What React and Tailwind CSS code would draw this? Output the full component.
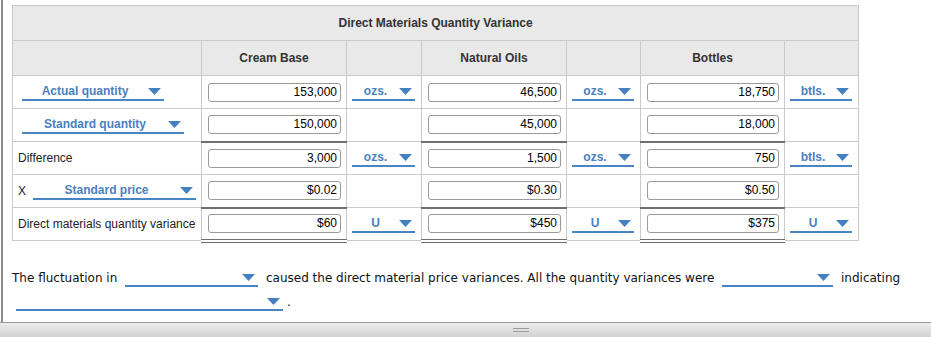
import React from 'react';

const Caret = ({ className = '' }) => (
  <svg width="13" height="7" viewBox="0 0 13 7" className={className}>
    <path d="M0 0h13L6.5 7z" fill="#4581c0" />
  </svg>
);

function Dropdown({ label = '', width, className = '' }) {
  return (
    <span
      className={`inline-flex items-center h-[18px] border-b-2 border-[#4a85c3] align-middle ${width} ${className}`}
    >
      <span className="flex-1 text-center font-bold text-[#4a80bf] leading-[16px]">{label}</span>
      <Caret className="mr-[3px] shrink-0" />
    </span>
  );
}

function Box({ value }) {
  return (
    <div className="h-[19px] w-full border border-[#9a9a9a] rounded-[3px] bg-white text-right pr-[3px] leading-[17px] text-black">
      {value}
    </div>
  );
}

const cell = 'border border-[#c8cacd] p-0';
const inputCell = `${cell} pl-[6px] pr-[5px]`;
const thick = 'border-t-2 border-t-[#6f6f6f]';
const dbl = 'border-b-4 border-b-[#6f6f6f] border-double';

export default function App() {
  const rows = [
    {
      label: (
        <div className="pl-[9px]">
          <Dropdown label="Actual quantity" width="w-[142px]" />
        </div>
      ),
      values: ['153,000', '46,500', '18,750'],
      units: ['ozs.', 'ozs.', 'btls.'],
    },
    {
      label: (
        <div className="pl-[9px]">
          <Dropdown label="Standard quantity" width="w-[162px]" />
        </div>
      ),
      values: ['150,000', '45,000', '18,000'],
      units: [null, null, null],
    },
    {
      label: <div className="pl-[5px]">Difference</div>,
      values: ['3,000', '1,500', '750'],
      units: ['ozs.', 'ozs.', 'btls.'],
      top: true,
    },
    {
      label: (
        <div className="pl-[5px] flex items-center">
          <span className="w-[15px]">X</span>
          <Dropdown label="Standard price" width="w-[163px]" />
        </div>
      ),
      values: ['$0.02', '$0.30', '$0.50'],
      units: [null, null, null],
    },
    {
      label: <div className="pl-[5px]">Direct materials quantity variance</div>,
      values: ['$60', '$450', '$375'],
      units: ['U', 'U', 'U'],
      top: true,
      last: true,
    },
  ];

  return (
    <div className="w-[931px] h-[337px] bg-white overflow-hidden font-['Liberation_Sans',Arial,sans-serif] text-[12px] text-[#222]">
      <div className="h-[322px] ml-px border-l-2 border-[#8c8c8c] pl-[9px] pt-[5px]">
        <table className="border-collapse table-fixed w-[846px]">
          <colgroup>
            <col className="w-[189px]" />
            <col className="w-[145px]" />
            <col className="w-[75px]" />
            <col className="w-[145px]" />
            <col className="w-[74px]" />
            <col className="w-[144px]" />
            <col className="w-[74px]" />
          </colgroup>
          <thead>
            <tr className="h-[35px] bg-[#e9e9e9]">
              <th colSpan={7} className={`${cell} font-bold text-[#333]`}>
                Direct Materials Quantity Variance
              </th>
            </tr>
            <tr className="h-[35px] bg-[#e9e9e9] font-bold text-[#333]">
              <th className={cell}></th>
              <th className={cell}>Cream Base</th>
              <th className={cell}></th>
              <th className={cell}>Natural Oils</th>
              <th className={cell}></th>
              <th className={cell}>Bottles</th>
              <th className={cell}></th>
            </tr>
          </thead>
          <tbody>
            {rows.map((r, i) => (
              <tr key={i} className="h-[33px]">
                <td className={cell}>{r.label}</td>
                {r.values.map((v, j) => (
                  <React.Fragment key={j}>
                    <td className={`${inputCell} ${r.top ? thick : ''} ${r.last ? dbl : ''}`}>
                      <Box value={v} />
                    </td>
                    <td className={`${cell} pl-[5px] pr-[6px]`}>
                      {r.units[j] && <Dropdown label={r.units[j]} width="w-full" />}
                    </td>
                  </React.Fragment>
                ))}
              </tr>
            ))}
          </tbody>
        </table>

        <p className="mt-[23px] font-['DejaVu_Sans',Verdana,sans-serif] text-[12px] leading-[24px] text-[#111] pr-[22px]">
          The fluctuation in{' '}
          <Dropdown width="w-[133px]" className="mx-1" />{' '}
          caused the direct material price variances. All the quantity variances were{' '}
          <Dropdown width="w-[111px]" className="mx-1" /> indicating{' '}
          <Dropdown width="w-[267px]" className="mx-1" />.
        </p>
      </div>
      <div className="h-[15px] border-t border-[#9a9a9a] bg-gradient-to-b from-[#ececec] to-[#d2d2d2] flex justify-center pt-[5px]">
        <div className="ml-[110px] w-[16px] h-[4px] border-y border-[#9c9c9c]"></div>
      </div>
    </div>
  );
}
